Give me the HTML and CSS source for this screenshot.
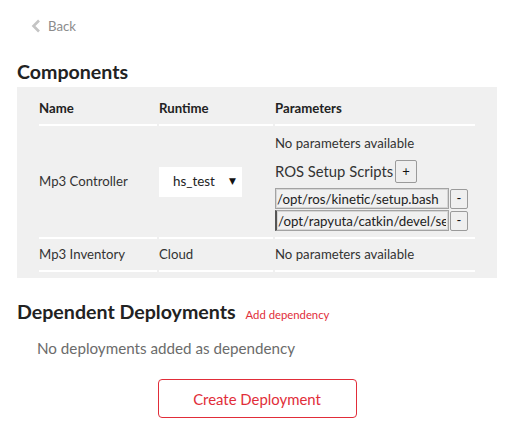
FILE: index.html
```html
<!DOCTYPE html>
<html>
<head>
<meta charset="utf-8">
<link rel="stylesheet" href="styles.css">
</head>
<body>
<div class="page">
  <div class="back">
    <svg class="chev" width="10" height="14" viewBox="0 0 10 14"><path d="M8 1.5 L2.5 7 L8 12.5" fill="none" stroke="#c4c4c4" stroke-width="2.6"/></svg>
    <span class="back-text">Back</span>
  </div>

  <h2 class="title">Components</h2>
  <div class="panel">
    <table class="comp">
      <colgroup><col class="c1"><col class="c2"><col class="c3"></colgroup>
      <thead>
        <tr><th>Name</th><th>Runtime</th><th>Parameters</th></tr>
      </thead>
      <tbody>
        <tr>
          <td class="mid">Mp3 Controller</td>
          <td class="mid">
            <div class="select"><span class="sel-text">hs_test</span><span class="sel-arrow">▼</span></div>
          </td>
          <td class="params">
            <div class="np">No parameters available</div>
            <div class="ros"><span class="ros-text">ROS Setup Scripts</span><button class="btn plus">+</button></div>
            <div class="scripts">
              <div class="srow"><input class="sinput" type="text" value="/opt/ros/kinetic/setup.bash"><button class="btn minus">-</button></div>
              <div class="srow"><input class="sinput caret" type="text" value="/opt/rapyuta/catkin/devel/setup.bash"><button class="btn minus">-</button></div>
            </div>
          </td>
        </tr>
        <tr>
          <td>Mp3 Inventory</td>
          <td>Cloud</td>
          <td>No parameters available</td>
        </tr>
      </tbody>
    </table>
  </div>

  <div class="dep-head">
    <h2 class="title dep-title">Dependent Deployments</h2>
    <span class="add-dep">Add dependency</span>
  </div>
  <div class="no-dep">No deployments added as dependency</div>
  <div class="actions">
    <button class="create">Create Deployment</button>
  </div>
</div>
</body>
</html>
```
FILE: styles.css
```css
html, body { margin: 0; padding: 0; background: #fff; }
body { font-family: "Lato", "Liberation Sans", sans-serif; color: #333; }
.page { width: 480px; padding: 0 15px 0 17px; }

.back { display: flex; align-items: center; gap: 7px; height: 20px; margin-top: 16px; padding-left: 14px; }
.chev { display: block; }
.back-text { font-size: 13.2px; color: #8c8c8c; }

.title { margin: 24px 0 3px; font-size: 19.6px; line-height: 24px; font-weight: 700; color: #222; }

.panel { background: #f0f0f0; padding: 6px 20px; }
.comp { width: 440px; border-collapse: separate; border-spacing: 2px 0; table-layout: fixed; font-size: 13.2px; }
.c1 { width: 118px; }
.c2 { width: 114px; }
.c3 { width: 200px; }
.comp th, .comp td { padding: 7px 0; line-height: 17px; text-align: left; border-bottom: 2px solid #fff; vertical-align: middle; }
.comp th { font-weight: 700; color: #222; }
.comp td { color: #333; }
.comp td.params { padding: 9px 0 6px; vertical-align: top; }

.select { width: 83px; height: 30px; background: #fff; display: flex; align-items: center; box-sizing: border-box; padding-left: 14px; position: relative; }
.sel-text { font-size: 13.4px; color: #222; }
.sel-arrow { position: absolute; right: 6px; top: 50%; transform: translateY(-60%); font-family: "DejaVu Sans", sans-serif; font-size: 9px; line-height: 9px; color: #111; }

.np { line-height: 17px; }
.ros { display: flex; align-items: center; gap: 2px; margin-top: 8px; height: 23px; }
.ros-text { font-size: 14.8px; color: #333; }
.btn { box-sizing: border-box; background: #efefef; border: 1px solid #9a9a9a; border-radius: 2px; padding: 0; font-family: "Lato", sans-serif; font-size: 13px; color: #111; line-height: 1; }
.plus { width: 22px; height: 23px; }
.scripts { margin-top: 5px; display: flex; flex-direction: column; gap: 1px; }
.srow { display: flex; align-items: center; gap: 1px; height: 21px; }
.sinput { box-sizing: border-box; width: 174px; height: 21px; margin: 0; padding: 0 2px 0 1px; border: 1px solid #a3a3a3; box-shadow: inset 0 0 0 1px #d6d6d6; background: #f0f0f0; font-family: "Lato", sans-serif; font-size: 13.3px; color: #222; outline: none; }
.caret { border-left: 2px solid #555; }
.minus { width: 18px; height: 20px; }

.dep-head { display: flex; align-items: baseline; gap: 10px; margin-top: 22px; }
.dep-title { margin: 0; }
.add-dep { font-size: 11.3px; color: #e12d39; }
.no-dep { margin-top: 14px; padding-left: 20px; font-size: 15.2px; line-height: 20px; color: #6b6b6b; }
.actions { display: flex; justify-content: center; margin-top: 21px; }
.create { width: 199px; height: 39px; background: #fff; border: 1px solid #e12d39; border-radius: 4px; font-family: "Lato", sans-serif; font-size: 14.9px; color: #e12d39; }
```
